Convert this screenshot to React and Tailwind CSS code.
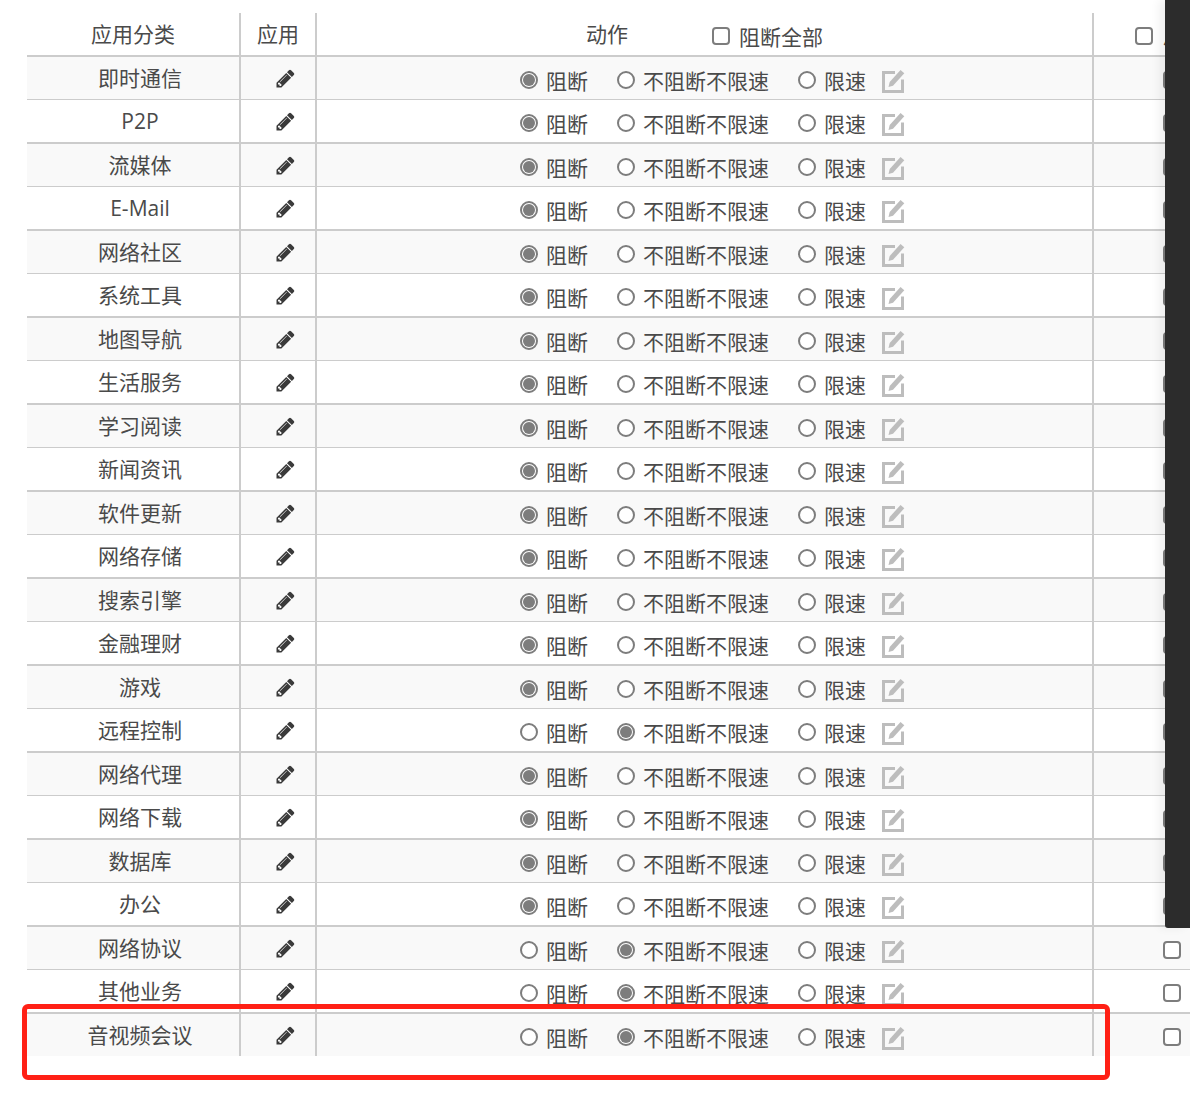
const rows = [
  ["即时通信", 0], ["P2P", 0], ["流媒体", 0], ["E-Mail", 0], ["网络社区", 0], ["系统工具", 0],
  ["地图导航", 0], ["生活服务", 0], ["学习阅读", 0], ["新闻资讯", 0], ["软件更新", 0], ["网络存储", 0],
  ["搜索引擎", 0], ["金融理财", 0], ["游戏", 0], ["远程控制", 1], ["网络代理", 0], ["网络下载", 0],
  ["数据库", 0], ["办公", 0], ["网络协议", 1], ["其他业务", 1], ["音视频会议", 1],
];

function PencilIcon() {
  return (
    <svg viewBox="0 0 1792 1792" className="w-[21px] h-[21px] text-[#3a3a3a]" fill="currentColor">
      <path d="M491 1536l91-91-235-235-91 91v107h128v128h107zm523-928q0-22-22-22-10 0-17 7l-542 542q-7 7-7 17 0 22 22 22 10 0 17-7l542-542q7-7 7-17zm-54-192l416 416-832 832h-416v-416zm683 96q0 53-37 90l-166 166-416-416 166-165q36-38 90-38 53 0 91 38l235 234q37 39 37 91z" />
    </svg>
  );
}

function EditIcon() {
  return (
    <svg viewBox="0 0 23 24" className="w-[23px] h-[24px] text-[#bdbdbd]" fill="none">
      <path d="M13 3.5H1.5v19h19V10.5" stroke="currentColor" strokeWidth="3" />
      <path d="M6.5 18l1.2-5L18.5 1l3.8 3.3L11 16.8z" fill="currentColor" />
    </svg>
  );
}

function Radio({ checked, label, className }) {
  return (
    <label className={`flex items-center ${className}`}>
      <span className="flex h-[18px] w-[18px] items-center justify-center rounded-full border-2 border-[#7d7d7d] bg-white">
        {checked && <span className="h-[12px] w-[12px] rounded-full bg-[#7d7d7d]" />}
      </span>
      <span className="ml-2 translate-y-[2px] leading-none">{label}</span>
    </label>
  );
}

function Checkbox() {
  return <span className="block h-[18px] w-[18px] rounded-[4px] border-2 border-[#7d7d7d] bg-white" />;
}

export default function App() {
  return (
    <div
      className="relative h-[1116px] w-[1190px] overflow-hidden bg-white text-[21px] text-[#4a4a4a]"
      style={{ fontFamily: '"Open Sans", "Noto Sans CJK SC", sans-serif' }}
    >
      <div className="ml-[27px] mt-[13px] w-[1200px]">
        {/* Header */}
        <div className="grid h-[44px] grid-cols-[214px_76px_777px_1fr] border-b-2 border-[#cccccc]">
          <div className="flex items-center justify-center border-r-2 border-[#cccccc] pt-[1px]">应用分类</div>
          <div className="flex items-center justify-center border-r-2 border-[#cccccc] pt-[1px]">应用</div>
          <div className="flex items-center border-r-2 border-[#cccccc]">
            <span className="ml-[269px] leading-none">动作</span>
            <span className="ml-[84px] flex items-center translate-y-[2px]">
              <Checkbox />
              <span className="ml-[9px] translate-y-[1px] leading-none">阻断全部</span>
            </span>
          </div>
          <div className="flex items-center gap-[10px] pl-[41px] pt-[4px] whitespace-nowrap">
            <Checkbox />
            <span>启用</span>
          </div>
        </div>

        {/* Rows */}
        {rows.map(([name, action], i) => (
          <div
            key={name}
            className={`grid grid-cols-[214px_76px_777px_1fr] ${i % 2 === 0 ? "h-[43px] border-b bg-[#f9f9f9]" : "h-[44px] border-b-2"} ${i === rows.length - 1 ? "!h-[42px] !border-b-0" : ""} border-[#cccccc]`}
          >
            <div className="flex items-center justify-center whitespace-nowrap border-r-2 border-[#cccccc] pl-[14px] pt-[1px]">{name}</div>
            <div className="flex items-center justify-center border-r-2 border-[#cccccc] pl-[14px] pt-[1px]">
              <PencilIcon />
            </div>
            <div className="flex items-center border-r-2 border-[#cccccc] pl-[203px] pt-[3px]">
              <Radio checked={action === 0} label="阻断" />
              <Radio checked={action === 1} label="不阻断不限速" className="ml-[29px]" />
              <Radio checked={false} label="限速" className="ml-[29px]" />
              <span className="ml-[16px] translate-y-[1px]">
                <EditIcon />
              </span>
            </div>
            <div className="flex items-center gap-[10px] pl-[69px] pt-[4px] whitespace-nowrap">
              <Checkbox />
              <span>启用</span>
            </div>
          </div>
        ))}
      </div>

      {/* Side panel over the table */}
      <div className="absolute right-0 top-0 h-[928px] w-[25px] rounded-bl-[3px] bg-[#2c2c2c] shadow-[-6px_0_10px_rgba(0,0,0,0.06)]" />

      {/* Red annotation */}
      <div className="absolute left-[22px] top-[1004px] h-[76px] w-[1088px] rounded-[6px] border-[5px] border-[#ff2015]" />
    </div>
  );
}
